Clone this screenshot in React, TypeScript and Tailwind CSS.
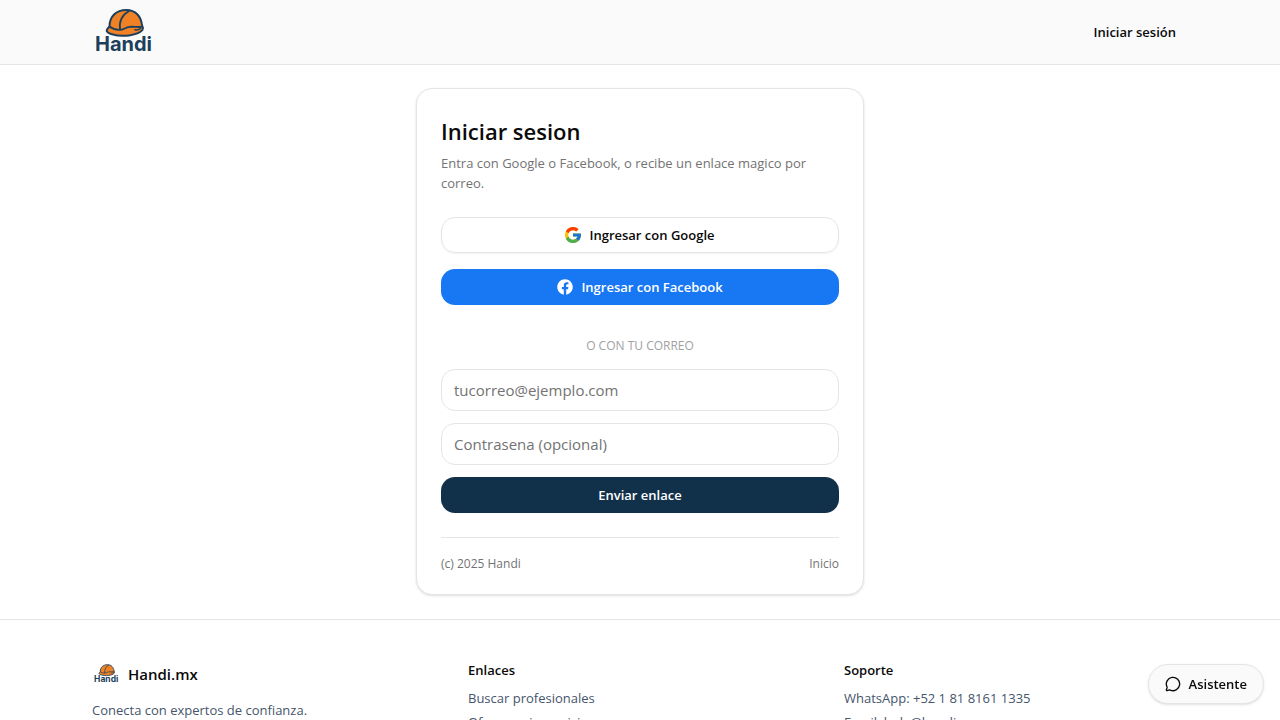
import React from "react";
import { MessageCircle } from "lucide-react";
import { FaFacebook } from "react-icons/fa";

function Logo({ className }: { className: string }) {
  return (
    <svg viewBox="0 0 66 56" className={className} role="img" aria-label="Handi">
      <path
        d="M19.500 22.500C19.500 12.500 26 6 36.500 6c9 0 14.500 6.500 15.500 15 .8 1.500 1.200 3.500.4 5-2 3.200-8 4.500-13.400 5.400-5.500.8-12 .4-17-1.200-4-1.200-6-2.700-5.200-4.200.6-1.400 1.600-2.500 2.700-3.500z"
        fill="#f08225"
        stroke="#1c3f5c"
        strokeWidth="2"
        strokeLinejoin="round"
      />
      <path
        d="M19.500 22.500c2.500 2 6 3.200 9.500 3.400 4.500.2 6-2.400 10.500-3 4-.6 8 .4 12 0M30 25.500c-1-8 2-14.500 9-18.500"
        fill="none"
        stroke="#1c3f5c"
        strokeWidth="1.800"
        strokeLinecap="round"
      />
      <path d="M45 25.800c2.200.4 4 0 5.500-1.300" fill="none" stroke="#1c3f5c" strokeWidth="1.600" strokeLinecap="round" />
      <text x="5" y="47" fontFamily="Inter, sans-serif" fontSize="20" fontWeight="700" fill="#1c3f5c">
        Handi
      </text>
    </svg>
  );
}

function GoogleIcon() {
  return (
    <svg viewBox="4 4 40 40" className="size-4" aria-hidden="true">
      <path fill="#FFC107" d="M43.611 20.083H42V20H24v8h11.303C33.654 32.657 29.223 36 24 36c-6.627 0-12-5.373-12-12s5.373-12 12-12c3.059 0 5.842 1.154 7.961 3.039l5.657-5.657C34.046 6.053 29.268 4 24 4 12.955 4 4 12.955 4 24s8.955 20 20 20 20-8.955 20-20c0-1.341-.138-2.650-.389-3.917z" />
      <path fill="#FF3D00" d="M6.306 14.691l6.571 4.819C14.655 15.108 18.961 12 24 12c3.059 0 5.842 1.154 7.961 3.039l5.657-5.657C34.046 6.053 29.268 4 24 4 16.318 4 9.656 8.337 6.306 14.691z" />
      <path fill="#4CAF50" d="M24 44c5.166 0 9.860-1.977 13.409-5.192l-6.190-5.238C29.211 35.091 26.715 36 24 36c-5.202 0-9.619-3.317-11.283-7.946l-6.522 5.025C9.505 39.556 16.227 44 24 44z" />
      <path fill="#1976D2" d="M43.611 20.083H42V20H24v8h11.303c-.792 2.237-2.231 4.166-4.087 5.571l6.193 5.238C36.971 39.205 44 34 44 24c0-1.341-.138-2.650-.389-3.917z" />
    </svg>
  );
}

const links = ["Buscar profesionales", "Ofrecer mis servicios"];
const support = ["WhatsApp: +52 1 81 8161 1335", "Email: hola@handi.mx"];

export default function App() {
  return (
    <div className="min-h-screen bg-white font-['Segoe_UI','Open_Sans','Noto_Sans',sans-serif] text-neutral-950">
      <header className="border-b border-neutral-200 bg-neutral-50">
        <div className="mx-auto flex h-16 max-w-[1100px] items-center justify-between">
          <a href="#inicio"><Logo className="h-14 w-[66px]" /></a>
          <a href="#login" className="px-3.5 text-[13px] leading-5 font-semibold">Iniciar sesión</a>
        </div>
      </header>

      <main className="px-4 pt-[23px] pb-6">
        <section className="mx-auto max-w-md rounded-2xl border border-neutral-200 bg-white px-6 pt-6 pb-5 shadow">
          <h1 className="text-[22px] leading-9 font-semibold">Iniciar sesion</h1>
          <p className="mt-1 pr-4 text-[13px] leading-5 text-neutral-500">Entra con Google o Facebook, o recibe un enlace magico por correo.</p>
          <div className="mt-6 flex flex-col gap-4">
            <button type="button" className="flex h-9 items-center justify-center gap-2 rounded-[14px] border border-neutral-200 text-[13px] leading-5 font-semibold shadow-xs">
              <GoogleIcon />
              Ingresar con Google
            </button>
            <button type="button" className="flex h-9 items-center justify-center gap-2 rounded-[14px] bg-[#1877f2] text-[13px] leading-5 font-semibold text-white">
              <FaFacebook className="size-4" aria-hidden="true" />
              Ingresar con Facebook
            </button>
          </div>
          <p className="mt-8 text-center text-xs leading-[18px] text-neutral-400 uppercase">O con tu correo</p>
          <form className="mt-[14px] flex flex-col gap-3">
            <input type="email" aria-label="Correo" placeholder="tucorreo@ejemplo.com" className="h-[42px] w-full rounded-[14px] border border-neutral-200 px-3 text-[15px] placeholder:text-neutral-500" />
            <input type="password" aria-label="Contrasena" placeholder="Contrasena (opcional)" className="h-[42px] w-full rounded-[14px] border border-neutral-200 px-3 text-[15px] placeholder:text-neutral-500" />
            <button type="submit" className="h-9 rounded-[14px] bg-[#11314a] text-[13px] leading-5 font-semibold text-white">Enviar enlace</button>
          </form>
          <div className="mt-6 flex justify-between border-t border-neutral-200 pt-4 text-xs leading-5 text-neutral-500">
            <span>(c) 2025 Handi</span>
            <a href="#inicio">Inicio</a>
          </div>
        </section>
      </main>

      <footer className="border-t border-neutral-200">
        <div className="mx-auto grid max-w-[1096px] grid-cols-3 gap-8 py-10 text-[13px] leading-5 text-slate-600">
          <div>
            <div className="flex items-center gap-2">
              <Logo className="size-7" />
              <span className="text-[15px] font-semibold text-neutral-950">Handi.mx</span>
            </div>
            <p className="mt-3">Conecta con expertos de confianza.</p>
          </div>
          <nav aria-label="Enlaces">
            <h2 className="font-semibold text-neutral-950">Enlaces</h2>
            <ul className="mt-2 space-y-1">
              {links.map((label) => <li key={label}><a href="#enlaces">{label}</a></li>)}
            </ul>
          </nav>
          <div>
            <h2 className="font-semibold text-neutral-950">Soporte</h2>
            <ul className="mt-2 space-y-1">
              {support.map((line) => <li key={line}>{line}</li>)}
            </ul>
          </div>
        </div>
      </footer>

      <button type="button" className="fixed right-4 bottom-4 flex h-10 items-center gap-2 rounded-full border border-neutral-200 bg-neutral-50 px-4 text-[13px] leading-5 font-semibold shadow">
        <MessageCircle className="size-4" aria-hidden="true" />
        Asistente
      </button>
    </div>
  );
}
